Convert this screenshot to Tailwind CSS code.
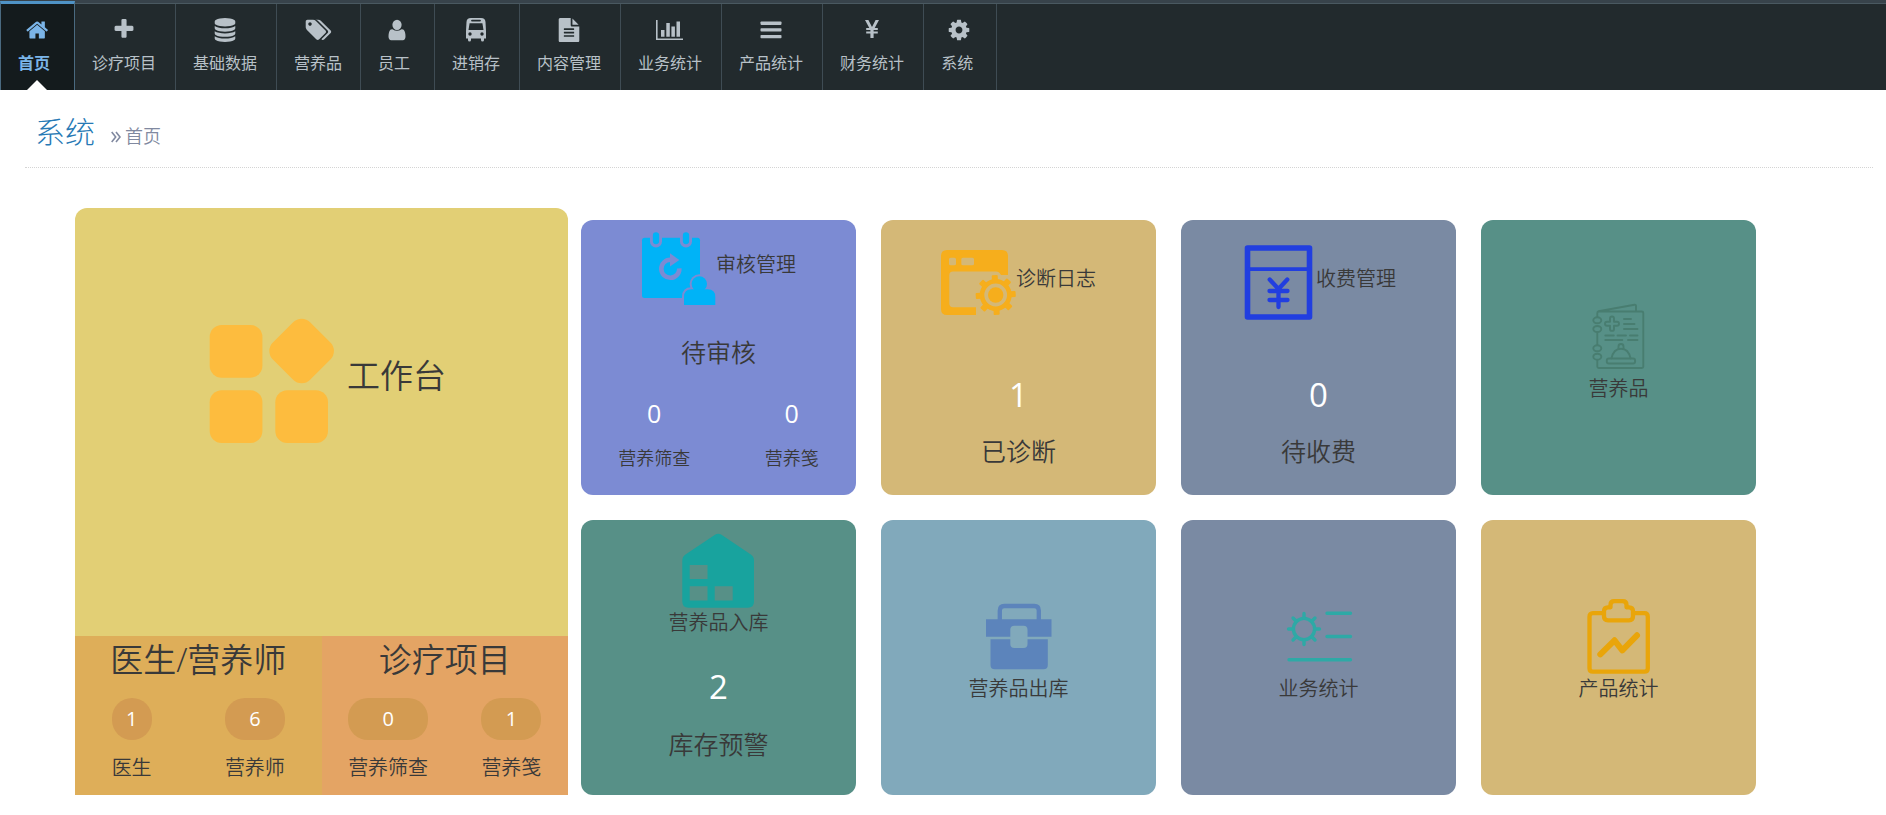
<!DOCTYPE html>
<html lang="zh-CN">
<head>
<meta charset="utf-8">
<meta name="viewport" content="width=device-width, initial-scale=1">
<title>系统 - 首页</title>
<script src="https://cdn.jsdelivr.net/npm/@tailwindcss/browser@4"></script>
</head>
<body class="bg-white text-[#393939] font-light font-['Open_Sans','Noto_Sans_CJK_SC',sans-serif]">

<header class="bg-[#222a2d] border-t-3 border-[#38434b]">
  <nav class="flex h-[87px] border-t border-[#4a5961] font-normal text-base leading-6 text-[#b8c1c8]" aria-label="主导航">
    <a href="#" aria-current="page" class="relative flex flex-col min-w-[75px] -mt-[3px] pt-[14px] px-[17px] border-t-3 border-x border-x-[#4a6a80] border-t-[#4f93c6] bg-[#141b1d] text-[#7bb5e8] font-bold">
      <svg class="self-center w-6 h-6" viewBox="0 0 1792 1792" fill="currentColor"><path d="M1408 992v480q0 26-19 45t-45 19h-384v-384h-256v384h-384q-26 0-45-19t-19-45v-480q0-1 .5-3t.5-3l575-474 575 474q1 2 1 6zm223-69l-62 74q-8 9-21 11h-3q-13 0-21-7l-692-577-692 577q-12 8-24 7-13-2-21-11l-62-74q-8-10-7-23.5t11-21.5l719-599q32-26 76-26t76 26l244 204v-195q0-14 9-23t23-9h192q14 0 23 9t9 23v408l219 182q10 8 11 21.5t-7 23.5z"/></svg>
      <span class="mt-[9px]">首页</span>
      <svg class="absolute bottom-0 left-[26px] w-5 h-[10px]" viewBox="0 0 20 10"><path d="M0 10L10 0l10 10z" fill="#fff"/></svg>
    </a>
    <a href="#" class="flex flex-col min-w-[74px] pt-[14px] pl-[17px] pr-[19px] border-r border-[#3f4c54]">
      <svg class="self-center w-6 h-6" viewBox="0 0 1792 1792" fill="currentColor"><path transform="translate(0 -60)" d="M1600 736v192q0 40-28 68t-68 28h-416v416q0 40-28 68t-68 28h-192q-40 0-68-28t-28-68v-416h-416q-40 0-68-28t-28-68v-192q0-40 28-68t68-28h416v-416q0-40 28-68t68-28h192q40 0 68 28t28 68v416h416q40 0 68 28t28 68z"/></svg>
      <span class="mt-[9px]">诊疗项目</span>
    </a>
    <a href="#" class="flex flex-col min-w-[74px] pt-[14px] pl-[17px] pr-[19px] border-r border-[#3f4c54]">
      <svg class="self-center w-6 h-6" viewBox="0 0 1792 1792" fill="currentColor"><path d="M896 768q237 0 443-43t325-127v170q0 69-103 128t-280 93.5-385 34.5-385-34.5-280-93.5-103-128v-170q119 84 325 127t443 43zm0 768q237 0 443-43t325-127v170q0 69-103 128t-280 93.5-385 34.5-385-34.5-280-93.5-103-128v-170q119 84 325 127t443 43zm0-384q237 0 443-43t325-127v170q0 69-103 128t-280 93.5-385 34.5-385-34.5-280-93.5-103-128v-170q119 84 325 127t443 43zm0-1152q208 0 385 34.5t280 93.5 103 128v128q0 69-103 128t-280 93.5-385 34.5-385-34.5-280-93.5-103-128v-128q0-69 103-128t280-93.5 385-34.5z"/></svg>
      <span class="mt-[9px]">基础数据</span>
    </a>
    <a href="#" class="flex flex-col min-w-[74px] pt-[14px] pl-[17px] pr-[18px] border-r border-[#3f4c54]">
      <svg class="self-center w-7 h-6" viewBox="0 0 2090 1792" fill="currentColor"><path d="M576 448q0-53-37.500-90.500t-90.500-37.500-90.500 37.500-37.500 90.500 37.500 90.500 90.500 37.500 90.500-37.500 37.500-90.500zm1067 576q0 53-37 90l-491 492q-39 37-91 37-53 0-90-37l-715-716q-38-37-64.500-101t-26.500-117v-416q0-52 38-90t90-38h416q53 0 117 26.500t102 64.500l715 714q37 39 37 91zm384 0q0 53-37 90l-491 492q-39 37-91 37-36 0-59-14t-53-45l470-470q37-37 37-90 0-52-37-91l-715-714q-38-38-102-64.500t-117-26.500h224q53 0 117 26.500t102 64.500l715 714q37 39 37 91z"/></svg>
      <span class="mt-[9px]">营养品</span>
    </a>
    <a href="#" class="flex flex-col min-w-[74px] pt-[14px] pl-[17px] pr-[19px] border-r border-[#3f4c54]">
      <svg class="self-center w-6 h-6" viewBox="0 0 1792 1792" fill="currentColor"><path transform="translate(90 0) scale(.9 1)" d="M1600 1399q0 109-62.500 187t-150.500 78h-982q-88 0-150.500-78t-62.500-187q0-85 8.500-160.500t31.500-152 58.500-131 94-89 134.500-34.500q195 128 377 128t377-128q76 0 134.500 34.500t94 89 58.500 131 31.500 152 8.500 160.500zm-320-887q0 159-112.500 271.500t-271.500 112.500-271.500-112.500-112.500-271.500 112.500-271.500 271.500-112.500 271.500 112.500 112.500 271.500z"/></svg>
      <span class="mt-[9px]">员工</span>
    </a>
    <a href="#" class="flex flex-col min-w-[74px] pt-[14px] pl-[17px] pr-[19px] border-r border-[#3f4c54]">
      <svg class="self-center w-6 h-6" viewBox="0 0 24 24" fill="currentColor"><path fill-rule="evenodd" d="M7 0h10c3 0 4.300 1.500 4.500 4l.5 9v7.500h-2V22a1.500 1.500 0 0 1-3 0v-1.500H7V22a1.500 1.500 0 0 1-3 0v-1.500H2V13l.5-9C2.700 1.500 4 0 7 0zM8 1.700a.8.800 0 0 0 0 1.800h8a.8.800 0 0 0 0-1.800zM5.600 5.200L4.500 12h15l-1.100-6.800zM6 14.300a1.700 1.700 0 1 0 0 3.400 1.700 1.700 0 0 0 0-3.400zm12 0a1.700 1.700 0 1 0 0 3.400 1.700 1.700 0 0 0 0-3.400z"/></svg>
      <span class="mt-[9px]">进销存</span>
    </a>
    <a href="#" class="flex flex-col min-w-[74px] pt-[14px] pl-[17px] pr-[19px] border-r border-[#3f4c54]">
      <svg class="self-center w-6 h-6" viewBox="0 0 1792 1792" fill="currentColor"><path d="M1596 476q14 14 28 36h-472v-472q22 14 36 28zm-476 164h544v1056q0 40-28 68t-68 28h-1344q-40 0-68-28t-28-68v-1600q0-40 28-68t68-28h800v544q0 40 28 68t68 28zm160 736v-64q0-14-9-23t-23-9h-704q-14 0-23 9t-9 23v64q0 14 9 23t23 9h704q14 0 23-9t9-23zm0-256v-64q0-14-9-23t-23-9h-704q-14 0-23 9t-9 23v64q0 14 9 23t23 9h704q14 0 23-9t9-23zm0-256v-64q0-14-9-23t-23-9h-704q-14 0-23 9t-9 23v64q0 14 9 23t23 9h704q14 0 23-9t9-23z"/></svg>
      <span class="mt-[9px]">内容管理</span>
    </a>
    <a href="#" class="flex flex-col min-w-[74px] pt-[14px] pl-[17px] pr-[19px] border-r border-[#3f4c54]">
      <svg class="self-center w-7 h-6" viewBox="0 0 28 24" fill="currentColor"><path d="M0 2h1.600v18.500H27V22H0zM5 12h3.500v6.800H5zM10.300 5h3.500v13.800h-3.500zM15.400 8.500h3.500v10.300h-3.500zM20.500 3.500H24v15.300h-3.500z"/></svg>
      <span class="mt-[9px]">业务统计</span>
    </a>
    <a href="#" class="flex flex-col min-w-[74px] pt-[14px] pl-[17px] pr-[19px] border-r border-[#3f4c54]">
      <svg class="self-center w-6 h-6" viewBox="0 0 24 24" fill="currentColor"><rect x="1.500" y="3.500" width="21" height="3.400" rx=".8"/><rect x="1.500" y="10.200" width="21" height="3.400" rx=".8"/><rect x="1.500" y="16.900" width="21" height="3.400" rx=".8"/></svg>
      <span class="mt-[9px]">产品统计</span>
    </a>
    <a href="#" class="flex flex-col min-w-[74px] pt-[14px] pl-[17px] pr-[19px] border-r border-[#3f4c54]">
      <svg class="self-center w-6 h-6" viewBox="0 0 24 24" fill="currentColor"><path d="M5 2h3.400L12 9l3.600-7H19l-4.300 8h3.100v2h-4.200v1.500h4.200v2h-4.200V20h-3.200v-4.500H6.200v-2h4.200V12H6.200v-2h3.100z"/></svg>
      <span class="mt-[9px]">财务统计</span>
    </a>
    <a href="#" class="flex flex-col min-w-[73px] pt-[14px] pl-[17px] pr-[19px] border-r border-[#3f4c54]">
      <svg class="self-center w-6 h-6" viewBox="0 0 1792 1792" fill="currentColor"><path d="M1152 896q0-106-75-181t-181-75-181 75-75 181 75 181 181 75 181-75 75-181zm512-109v222q0 12-8 23t-20 13l-185 28q-19 54-39 91 35 50 107 138 10 12 10 25t-9 23q-27 37-99 108t-94 71q-12 0-26-9l-138-108q-44 23-91 38-16 136-29 186-7 28-36 28h-222q-14 0-24.500-8.500t-11.500-21.500l-28-184q-49-16-90-37l-141 107q-10 9-25 9-14 0-25-11-126-114-165-168-7-10-7-23 0-12 8-23 15-21 51-66.500t54-70.500q-27-50-41-99l-183-27q-13-2-21-12.500t-8-23.500v-222q0-12 8-23t19-13l186-28q14-46 39-92-40-57-107-138-10-12-10-24 0-10 9-23 26-36 98.500-107.500t94.500-71.500q13 0 26 10l138 107q44-23 91-38 16-136 29-186 7-28 36-28h222q14 0 24.500 8.500t11.500 21.500l28 184q49 16 90 37l142-107q9-9 24-9 13 0 25 10 129 119 165 170 7 8 7 22 0 12-8 23-15 21-51 66.500t-54 70.500q26 50 41 98l183 28q13 2 21 12.500t8 23.500z"/></svg>
      <span class="mt-[9px]">系统</span>
    </a>
  </nav>
</header>

<div class="ml-[25px] mr-[13px] pl-[10px] pt-[18px] h-[78px] border-b border-dotted border-[#d4d4d4]">
  <h1 class="flex items-baseline text-[30px] leading-[48px] text-[#2679b5]">系统
    <small class="flex items-baseline ml-4 text-[18px] text-[#8089a0]">
      <svg class="w-[10px] h-3 mr-1" viewBox="0 0 10 12" fill="none" stroke="currentColor" stroke-width="1.600"><path d="M.7 1l4 5-4 5M5 1l4 5-4 5"/></svg><span class="font-[350]">首页</span></small>
  </h1>
</div>

<main class="flex items-end gap-[13px] pt-10 pl-[75px] pr-[130px] pb-5 font-[350]">

  <section class="flex flex-col flex-[493] min-w-0 overflow-hidden rounded-t-xl">
    <a href="#" class="flex h-[428px] items-start justify-center pt-[98px] bg-[#e2cf75]">
      <svg class="w-[150px] h-[150px]" viewBox="0 0 150 150" fill="#fdbc3e"><rect x="12.700" y="19" width="52.700" height="52.700" rx="12"/><rect x="12.700" y="84.300" width="52.700" height="52.700" rx="12"/><rect x="78.300" y="84.300" width="52.700" height="52.700" rx="12"/><rect x="78.300" y="18.700" width="52.700" height="52.700" rx="12" transform="rotate(45 104.700 45)"/></svg>
      <span class="mt-[46px] text-[33px] leading-[48px]">工作台</span>
    </a>
    <div class="grid grid-cols-2 text-center">
      <div class="pb-3 bg-[#deae59]">
        <h2 class="text-[33px] leading-[48px]">医生/营养师</h2>
        <div class="flex justify-around mt-[14px] text-xl">
          <div class="flex flex-col"><span class="rounded-[20px] bg-[#d39b52] text-white font-normal leading-[42px]">1</span><span class="mt-[13px] leading-[30px]">医生</span></div>
          <div class="flex flex-col"><span class="rounded-[20px] bg-[#d39b52] text-white font-normal leading-[42px]">6</span><span class="mt-[13px] leading-[30px]">营养师</span></div>
        </div>
      </div>
      <div class="pb-3 bg-[#e4a464]">
        <h2 class="text-[33px] leading-[48px]">诊疗项目</h2>
        <div class="flex justify-around mt-[14px] text-xl">
          <div class="flex flex-col"><span class="rounded-[20px] bg-[#d39b52] text-white font-normal leading-[42px]">0</span><span class="mt-[13px] leading-[30px]">营养筛查</span></div>
          <div class="flex flex-col"><span class="rounded-[20px] bg-[#d39b52] text-white font-normal leading-[42px]">1</span><span class="mt-[13px] leading-[30px]">营养笺</span></div>
        </div>
      </div>
    </div>
  </section>

  <section class="grid grid-cols-4 gap-[25px] flex-[1175] min-w-0 text-xl leading-[30px]">

    <a href="#" class="flex flex-col items-center h-[275px] pt-[11px] rounded-xl bg-[#7c8bd3]">
      <span class="flex items-center">
        <svg class="w-[75px] h-[75px]" viewBox="0 0 75 75" fill="#00b3f7"><rect x="1" y="6.700" width="58" height="60.300" rx="2.500"/><g stroke-linecap="round"><path d="M15 4v6.500M45 4v6.500" stroke="#7c8bd3" stroke-width="12"/><path d="M15 4.300v5.700M45 4.300v5.700" stroke="#00b3f7" stroke-width="6.300"/></g><path d="M29.300 28.800a9 9 0 1 0 9 8.500" fill="none" stroke="#7c8bd3" stroke-width="4.600"/><path d="M29 22.300l9.300 6.700-9.300 6.500z" fill="#7c8bd3"/><path d="M43 75V66q0-7.700 7.500-7.700h16.300q7.500 0 7.500 7.700v9z" stroke="#7c8bd3" stroke-width="4"/><circle cx="58.300" cy="53" r="9.700" fill="#7c8bd3"/><circle cx="58.300" cy="53" r="7.700"/><path d="M43 74v-8q0-7.700 7.500-7.700h16.300q7.500 0 7.500 7.700v8z"/></svg>
        <span class="-mt-2">审核管理</span>
      </span>
      <span class="mt-7 text-[25px] leading-9">待审核</span>
      <span class="flex self-stretch justify-around mt-[25px] text-lg text-center">
        <span class="flex flex-col"><span class="text-[25px] leading-9 text-white font-normal">0</span><span class="mt-3 leading-[30px]">营养筛查</span></span>
        <span class="flex flex-col"><span class="text-[25px] leading-9 text-white font-normal">0</span><span class="mt-3 leading-[30px]">营养笺</span></span>
      </span>
    </a>

    <a href="#" class="flex flex-col items-center h-[275px] pt-[25px] rounded-xl bg-[#d4b877]">
      <span class="flex items-center">
        <svg class="w-[75px] h-[75px]" viewBox="0 0 75 75" fill="#f6ae1c"><path fill-rule="evenodd" d="M6 5h55q6 0 6 6v19H60l-1-1.500q-1.300-2-3.500-2H12q-3.700 0-3.700 3.700V58.500q0 3.700 3.700 3.700H35V70H6q-6 0-6-6V11q0-6 6-6zm3.500 7.700q-1.500 0-1.500 1.500v4.500q0 1.500 1.500 1.500h4q1.500 0 1.500-1.500v-4.500q0-1.500-1.500-1.500zm12.300 0q-1.500 0-1.500 1.500v4.500q0 1.500 1.500 1.500h9.700q1.500 0 1.500-1.500v-4.500q0-1.500-1.500-1.500z"/><circle cx="54.700" cy="50" r="13.700" fill="none" stroke="#f6ae1c" stroke-width="4.600"/><circle cx="54.700" cy="50" r="7.700"/><g transform="rotate(-3 54.700 50)"><g id="teeth"><rect x="51.700" y="30" width="6" height="6" rx="1"/><rect x="51.700" y="64" width="6" height="6" rx="1"/><rect x="34.700" y="47" width="6" height="6" rx="1"/><rect x="68.700" y="47" width="6" height="6" rx="1"/></g><use href="#teeth" transform="rotate(45 54.700 50)"/></g></svg>
        <span class="-mt-2">诊断日志</span>
      </span>
      <span class="mt-[51px] text-[33px] leading-[48px] text-white font-normal">1</span>
      <span class="mt-[14px] text-[25px] leading-9">已诊断</span>
    </a>

    <a href="#" class="flex flex-col items-center h-[275px] pt-[25px] rounded-xl bg-[#7a8aa3]">
      <span class="flex items-center">
        <svg class="w-[75px] h-[75px]" viewBox="0 0 75 75" fill="none" stroke="#213ee0" stroke-linecap="round" stroke-linejoin="round"><rect x="6.500" y="3" width="62" height="69" stroke-width="5.600"/><path d="M7 24.200h61" stroke-width="3.800"/><path d="M28.700 34.500l8.800 9.500 8.800-9.500M37.500 44v18M28.500 46h18M28.500 55h18" stroke-width="4.300"/></svg>
        <span class="-mt-2">收费管理</span>
      </span>
      <span class="mt-[51px] text-[33px] leading-[48px] text-white font-normal">0</span>
      <span class="mt-[14px] text-[25px] leading-9">待收费</span>
    </a>

    <a href="#" class="flex flex-col items-center justify-center h-[275px] pb-3 rounded-xl bg-[#579087]">
      <svg class="w-[75px] h-[75px]" viewBox="0 0 75 75" fill="none" stroke="#487d70" stroke-width="1.900" stroke-linecap="round" stroke-linejoin="round"><path d="M16.300 18v-4q0-1.500 1.500-1.500h43q1.500 0 1.500 1.500v53.500q0 1.500-1.500 1.500h-43q-1.500 0-1.500-1.500V61M16.300 33.300v12.500M17.500 12.300l36-6.500q1.500-.2 1.500 1.300v5"/><ellipse cx="16.300" cy="21.300" rx="4" ry="3"/><ellipse cx="16.300" cy="30" rx="4" ry="3"/><ellipse cx="16.300" cy="49.300" rx="4" ry="3"/><ellipse cx="16.300" cy="57.700" rx="4" ry="3"/><path d="M29 19.500q0-2 2-2t2 2v3.200h3q2 0 2 2t-2 2h-3v3.200q0 2-2 2t-2-2v-3.200h-3q-2 0-2-2t2-2h3zM43 20h7M43 25h10.500M43 30h13.500M24.300 36.500h8.500M36.500 36.500h8.500M49 36.500h7.500M24.300 41h17M47 41h9.500"/><rect x="25.800" y="59.500" width="28.300" height="5" rx="2"/><path d="M30.500 59.300q2-9.600 9.500-9.600t9.500 9.600M37.500 49.500v-2q0-2.500 2.500-2.500t2.500 2.500v2"/></svg>
      <span>营养品</span>
    </a>

    <a href="#" class="flex flex-col items-center h-[275px] pt-[13px] rounded-xl bg-[#579087]">
      <svg class="w-[75px] h-[75px]" viewBox="0 0 75 75" fill="#18a39e"><path fill-rule="evenodd" d="M34 1.700q3.300-2 6.500 0L69.800 21.500Q73 23.700 73 27.500V68.500q0 6.200-6.200 6.200H7.500q-6.200 0-6.200-6.200V27.500q0-3.800 3.200-6zM8.700 32v14h17.800V32zm0 21.200v14.200h17.800V53.200zm25 0v14.200h18V53.200z"/></svg>
      <span>营养品入库</span>
      <span class="mt-[25px] text-[33px] leading-[48px] text-white font-normal">2</span>
      <span class="mt-[15px] text-[25px] leading-9">库存预警</span>
    </a>

    <a href="#" class="flex flex-col items-center justify-center h-[275px] pb-3 rounded-xl bg-[#81a9bb]">
      <svg class="w-[75px] h-[75px]" viewBox="0 0 75 75" fill="#5c84bb"><path d="M18.800 21v-9.500q0-4.500 4.500-4.500h30q4.500 0 4.500 4.500V21" fill="none" stroke="#5c84bb" stroke-width="4.300"/><path d="M5 20.300h65.500v17.500H5zM9.500 40.300h57.300V66q0 4.300-4.300 4.300H13.800q-4.300 0-4.300-4.300z"/><rect x="29.300" y="26.700" width="17.200" height="22.300" rx="4" fill="#81a9bb"/></svg>
      <span>营养品出库</span>
    </a>

    <a href="#" class="flex flex-col items-center justify-center h-[275px] pb-3 rounded-xl bg-[#7a8aa3]">
      <svg class="w-[75px] h-[75px]" viewBox="0 0 75 75" fill="none" stroke="#2ea9a6" stroke-width="3.400" stroke-linecap="round"><circle cx="23" cy="30" r="10.600"/><g id="rays"><path d="M23 14.500V19M23 41v4.500M7.500 30H12M34 30h4.500"/></g><use href="#rays" transform="rotate(45 23 30)"/><path d="M46 14.300h23.500M46 37.500h23.500M8 60.700h61.500"/></svg>
      <span>业务统计</span>
    </a>

    <a href="#" class="flex flex-col items-center justify-center h-[275px] pb-3 rounded-xl bg-[#d4b877]">
      <svg class="w-[75px] h-[75px]" viewBox="0 0 75 75" fill="none" stroke="#e9a50a" stroke-width="4.300" stroke-linecap="round" stroke-linejoin="round"><path d="M22.500 14.200H12q-3.500 0-3.500 3.500v51.500q0 3.500 3.500 3.500h51.300q3.500 0 3.500-3.500V17.700q0-3.500-3.500-3.500H52.500"/><path d="M27 8.300h2.500V6q0-3.800 3.800-3.800h8.400q3.800 0 3.800 3.800v2.300H48q4 0 4 4v5q0 4-4 4H27q-4 0-4-4v-5q0-4 4-4z"/><path d="M19.300 55.300l14.200-14 7.800 10 14.700-15" stroke-width="6"/></svg>
      <span>产品统计</span>
    </a>
  </section>
</main>
</body>
</html>
